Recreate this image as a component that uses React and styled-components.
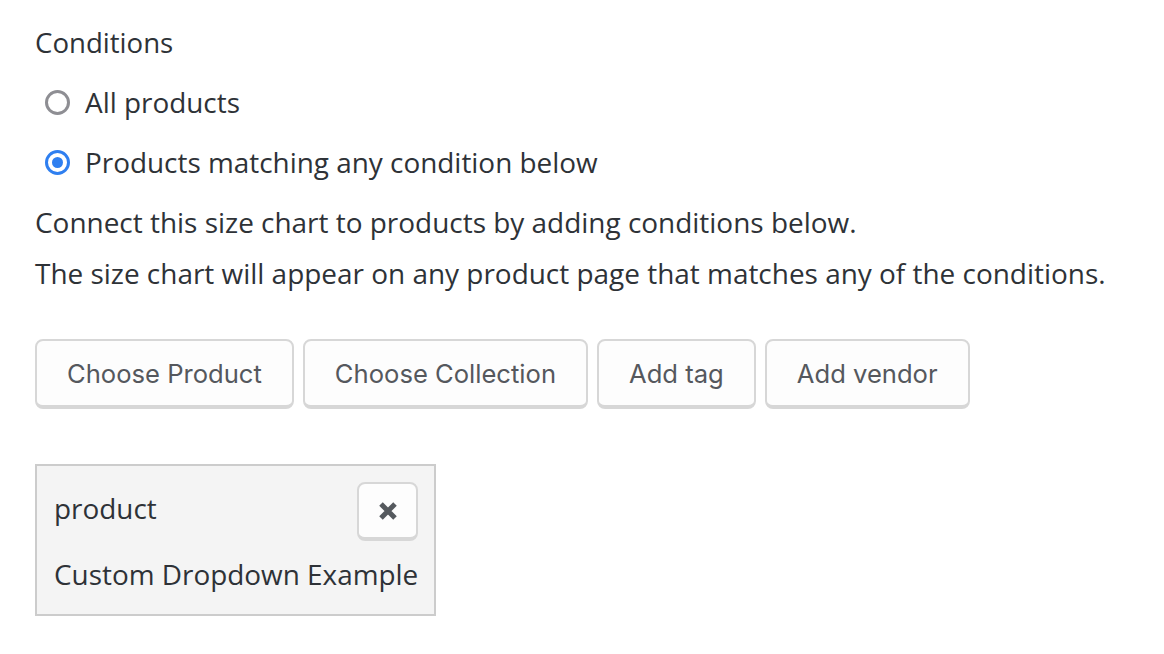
import React, { useState } from 'react';
import styled, { createGlobalStyle } from 'styled-components';

const GlobalStyle = createGlobalStyle`
  body {
    margin: 0;
    background: #ffffff;
    font-family: "Open Sans", "Noto Sans", sans-serif;
    color: #2e3237;
  }
`;

const Page = styled.div`
  padding: 24px 35px;
  display: flex;
  flex-direction: column;
  align-items: flex-start;
`;

const Heading = styled.div`
  font-size: 27.6px;
  line-height: 36px;
`;

const RadioList = styled.div`
  display: flex;
  flex-direction: column;
  gap: 24px;
  margin-top: 24px;
  padding-left: 10px;
`;

const RadioRow = styled.label`
  display: flex;
  align-items: center;
  gap: 15px;
  font-size: 27.9px;
  line-height: 36px;
  cursor: pointer;
`;

const RadioDot = styled.span`
  width: 25px;
  height: 25px;
  box-sizing: border-box;
  border-radius: 50%;
  border: 3px solid ${(p) => (p.checked ? '#2f7ff0' : '#8e8e93')};
  display: flex;
  align-items: center;
  justify-content: center;
  &::after {
    content: '';
    width: 11px;
    height: 11px;
    border-radius: 50%;
    background: #2f7ff0;
    display: ${(p) => (p.checked ? 'block' : 'none')};
  }
`;

const Help = styled.p`
  margin: 0;
  font-size: 27.95px;
  line-height: 36px;
`;

const HelpBlock = styled.div`
  display: flex;
  flex-direction: column;
  gap: 15px;
  margin-top: 24px;
`;

const ButtonRow = styled.div`
  display: flex;
  gap: 9px;
  margin-top: 48px;
`;

const Button = styled.button`
  height: 70px;
  padding: 0 30px;
  background: #fdfdfd;
  border: 2px solid #d7d7d7;
  border-bottom-width: 4px;
  border-radius: 8px;
  font-family: Inter, "Liberation Sans", sans-serif;
  font-size: 25.6px;
  color: #55585d;
  cursor: pointer;
`;

const ConditionCard = styled.div`
  margin-top: 55px;
  width: 401px;
  box-sizing: border-box;
  background: #f4f4f4;
  border: 2px solid #cccccc;
  padding: 16px 17px 22px;
`;

const CardTop = styled.div`
  display: flex;
  justify-content: space-between;
  align-items: flex-start;
`;

const CardText = styled.div`
  font-size: 27.9px;
  line-height: 36px;
  margin-top: ${(p) => p.gap || 0}px;
  white-space: nowrap;
`;

const CloseButton = styled.button`
  width: 61px;
  height: 59px;
  margin-right: -1px;
  background: #fdfdfd;
  border: 2px solid #d7d7d7;
  border-bottom-width: 4px;
  border-radius: 8px;
  display: flex;
  align-items: center;
  justify-content: center;
  padding: 0;
  cursor: pointer;
`;

const App = () => {
  const [mode, setMode] = useState('matching');
  return (
    <Page>
      <GlobalStyle />
      <Heading>Conditions</Heading>
      <RadioList>
        <RadioRow onClick={() => setMode('all')}>
          <RadioDot checked={mode === 'all'} />
          All products
        </RadioRow>
        <RadioRow onClick={() => setMode('matching')}>
          <RadioDot checked={mode === 'matching'} />
          Products matching any condition below
        </RadioRow>
      </RadioList>
      <HelpBlock>
        <Help>Connect this size chart to products by adding conditions below.</Help>
        <Help>The size chart will appear on any product page that matches any of the conditions.</Help>
      </HelpBlock>
      <ButtonRow>
        <Button>Choose Product</Button>
        <Button>Choose Collection</Button>
        <Button>Add tag</Button>
        <Button>Add vendor</Button>
      </ButtonRow>
      <ConditionCard>
        <CardTop>
          <CardText gap={8}>product</CardText>
          <CloseButton aria-label="Remove">
            <svg width="20" height="20" viewBox="0 0 20 20">
              <path d="M3 3 L17 17 M17 3 L3 17" stroke="#55595e" strokeWidth="5" strokeLinecap="butt" />
            </svg>
          </CloseButton>
        </CardTop>
        <CardText gap={15}>Custom Dropdown Example</CardText>
      </ConditionCard>
    </Page>
  );
};

export default App;
